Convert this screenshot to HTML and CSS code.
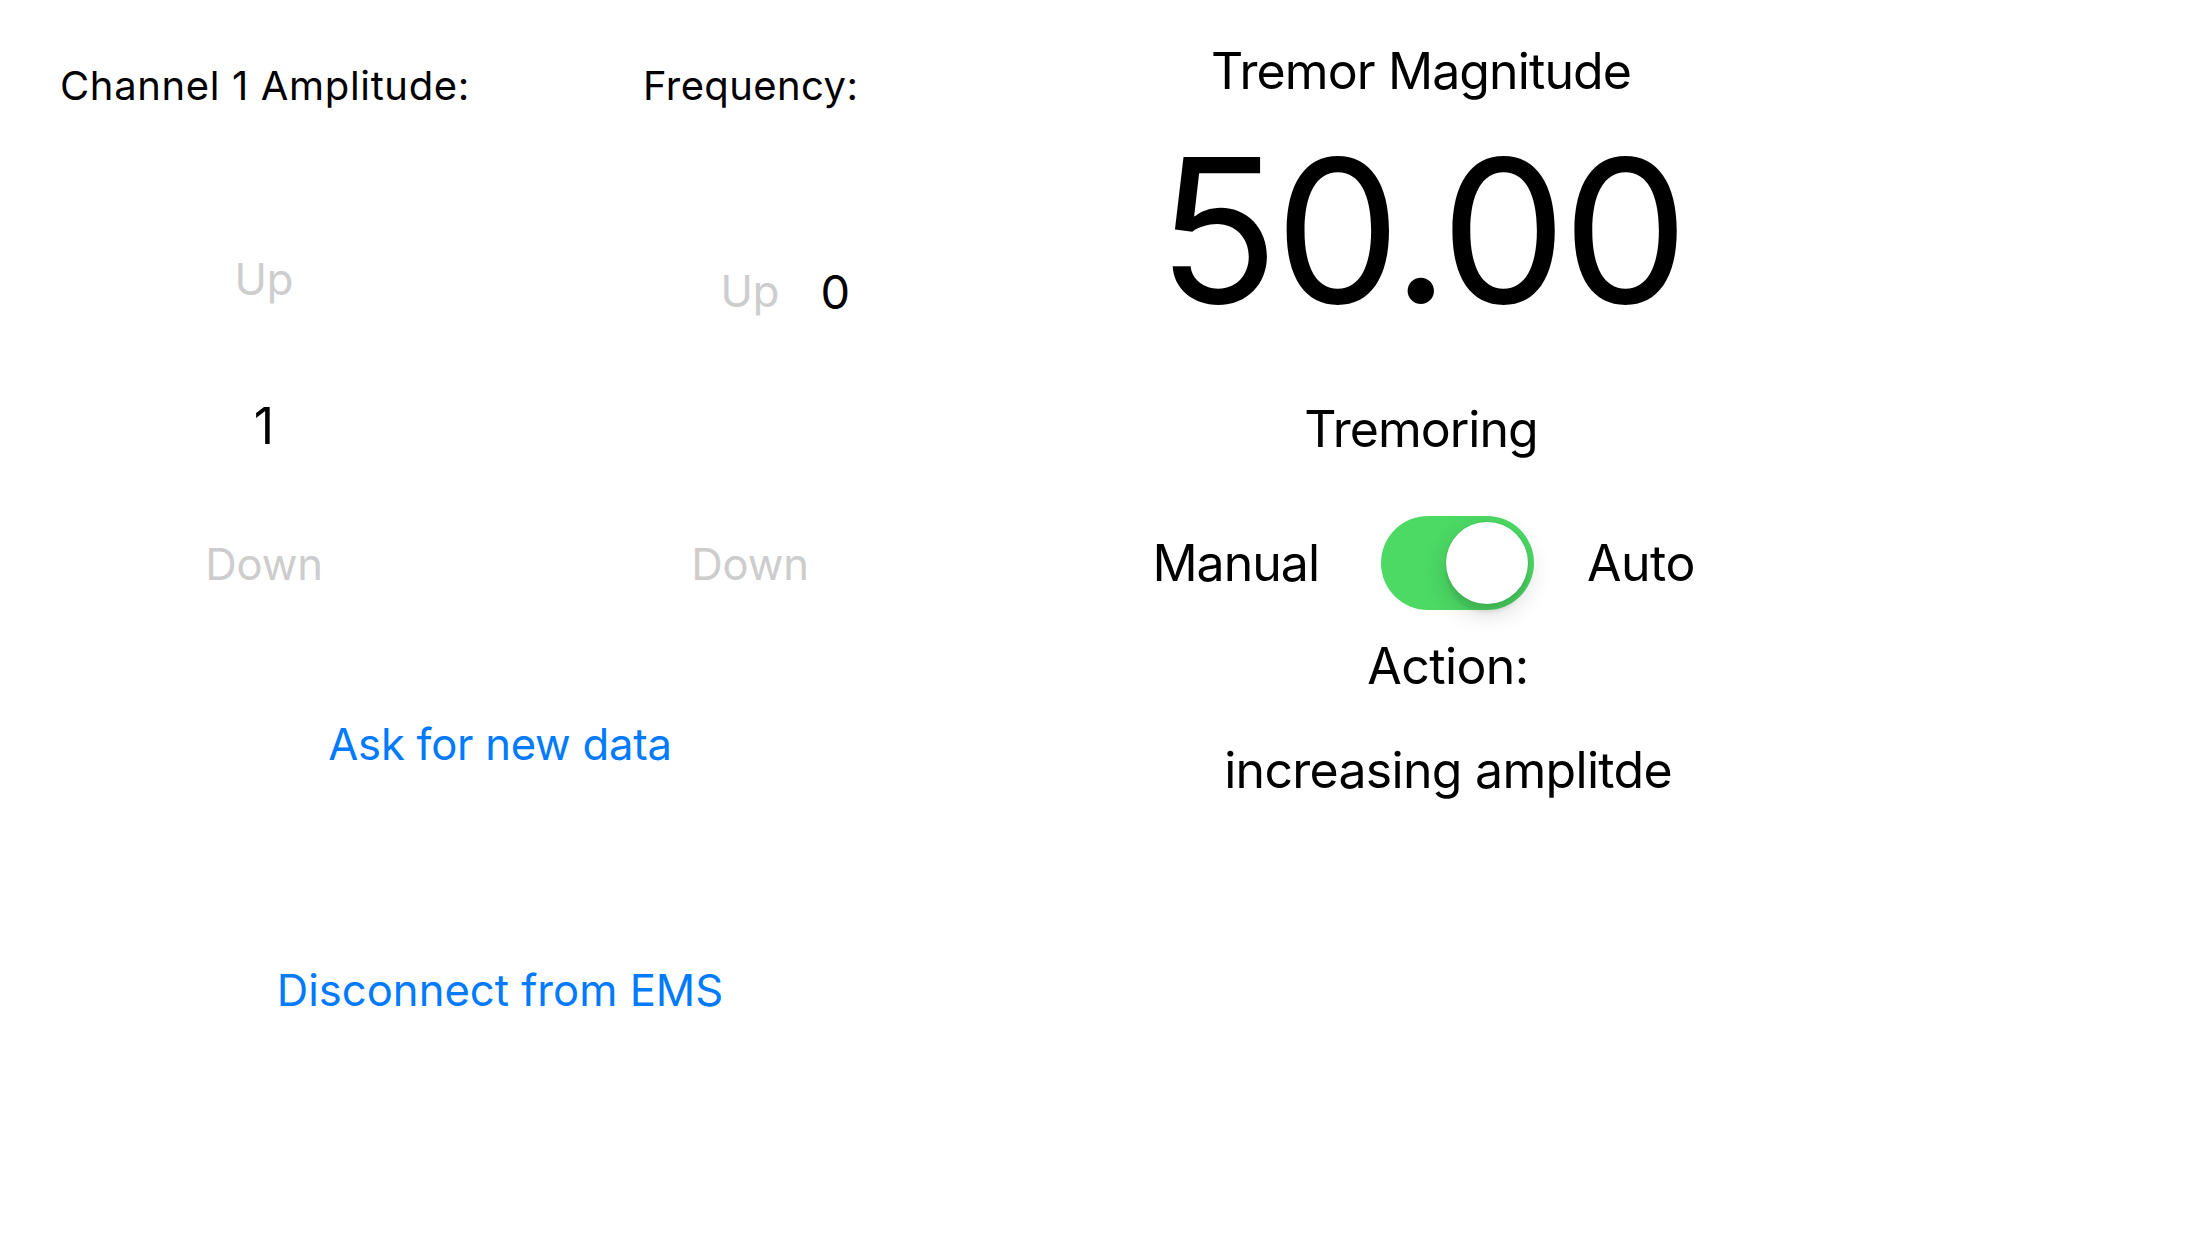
FILE: index.html
```html
<!DOCTYPE html>
<html lang="en">
<head>
<meta charset="utf-8">
<title>Tremor EMS</title>
<link rel="stylesheet" href="styles.css">
</head>
<body>
<main class="screen">
  <section class="controls">
    <div class="labels">
      <span class="label label-amp">Channel 1 Amplitude:</span>
      <span class="label label-freq">Frequency:</span>
    </div>
    <div class="steppers">
      <div class="stepper stepper-amp">
        <span class="step-btn amp-up">Up</span>
        <span class="value amp-value">1</span>
        <span class="step-btn amp-down">Down</span>
      </div>
      <div class="stepper stepper-freq">
        <div class="freq-row">
          <span class="spacer"></span>
          <span class="step-btn">Up</span>
          <span class="value freq-value">0</span>
        </div>
        <span class="step-btn freq-down">Down</span>
      </div>
    </div>
    <div class="actions">
      <span class="link ask">Ask for new data</span>
      <span class="link disconnect">Disconnect from EMS</span>
    </div>
  </section>
  <section class="monitor">
    <h1 class="title">Tremor Magnitude</h1>
    <div class="magnitude">50.00</div>
    <div class="status">Tremoring</div>
    <div class="mode-row">
      <span class="mode mode-manual">Manual</span>
      <span class="switch"><span class="knob"></span></span>
      <span class="mode mode-auto">Auto</span>
    </div>
    <div class="action-label">Action:</div>
    <div class="action-value">increasing amplitde</div>
  </section>
</main>
</body>
</html>
```

FILE: styles.css
```css
* {
  box-sizing: border-box;
  margin: 0;
  padding: 0;
}

html,
body {
  width: 2208px;
  height: 1242px;
  background: #ffffff;
  overflow: hidden;
}

body {
  font-family: Inter, "Noto Sans", sans-serif;
  color: #000000;
}

.screen {
  display: grid;
  grid-template-columns: 1100px 642px 1fr;
  height: 1242px;
}

/* ---------- left: controls ---------- */

.controls {
  display: flex;
  flex-direction: column;
}

.labels {
  display: grid;
  grid-template-columns: 643px auto;
  margin-top: 66px;
  font-size: 40px;
  line-height: 39px;
  letter-spacing: 0.4px;
}

.label-amp {
  padding-left: 60px;
  letter-spacing: 0.65px;
}

.steppers {
  display: grid;
  grid-template-columns: 528px 444px;
}

.stepper {
  display: flex;
  flex-direction: column;
  align-items: center;
}

.step-btn {
  display: block;
  font-size: 43.6px;
  line-height: 43.6px;
  color: #cdcdcd;
}

.value {
  display: block;
  color: #000000;
}

.amp-up {
  margin-top: 153px;
}

.amp-value {
  margin-top: 99px;
  font-size: 50px;
  line-height: 50px;
}

.amp-down {
  margin-top: 92px;
}

.amp-down,
.freq-down {
  letter-spacing: -0.2px;
}

.freq-row {
  display: grid;
  grid-template-columns: 1fr auto 1fr;
  align-items: start;
  width: 100%;
  margin-top: 165px;
  height: 43.6px;
}

.freq-value {
  font-size: 47px;
  line-height: 43.6px;
  padding-left: 41px;
}

.freq-down {
  margin-top: 229px;
}

.actions {
  display: flex;
  flex-direction: column;
  align-items: center;
  width: 1000px;
}

.link {
  display: block;
  font-size: 43.6px;
  line-height: 43.6px;
  color: #007aff;
}

.ask {
  margin-top: 137px;
  letter-spacing: -0.25px;
}

.disconnect {
  margin-top: 202px;
}

/* ---------- right: monitor ---------- */

.monitor {
  display: flex;
  flex-direction: column;
  align-items: stretch;
  text-align: center;
}

.title {
  margin-top: 46px;
  font-weight: 400;
  font-size: 50px;
  line-height: 50px;
  letter-spacing: -0.9px;
}

.magnitude {
  margin-top: 34px;
  font-size: 200px;
  line-height: 200px;
  letter-spacing: -4px;
}

.status {
  margin-top: 74px;
  font-size: 50px;
  line-height: 50px;
  letter-spacing: -1px;
}

.mode-row {
  display: grid;
  grid-template-columns: 281px 153px 1fr;
  align-items: center;
  height: 94px;
  margin-top: 62px;
}

.mode {
  font-size: 50px;
  line-height: 50px;
}

.mode-manual {
  text-align: right;
  padding-right: 62px;
  letter-spacing: -1px;
}

.mode-auto {
  text-align: left;
  padding-left: 53px;
  letter-spacing: -0.5px;
}

.switch {
  display: flex;
  justify-content: flex-end;
  align-items: center;
  width: 153px;
  height: 94px;
  padding: 6px;
  border-radius: 47px;
  background: #4cd964;
}

.knob {
  display: block;
  width: 82px;
  height: 82px;
  border-radius: 50%;
  background: #ffffff;
  box-shadow: 0 0 0 1px rgba(0, 0, 0, 0.04), 0 9px 3px rgba(0, 0, 0, 0.06), 0 9px 24px rgba(0, 0, 0, 0.16);
}

.action-label {
  margin-top: 31px;
  padding-left: 54px;
  font-size: 50px;
  line-height: 50px;
  letter-spacing: -0.6px;
}

.action-value {
  margin-top: 54px;
  padding-left: 54px;
  font-size: 50px;
  line-height: 50px;
  letter-spacing: -0.7px;
}
```
